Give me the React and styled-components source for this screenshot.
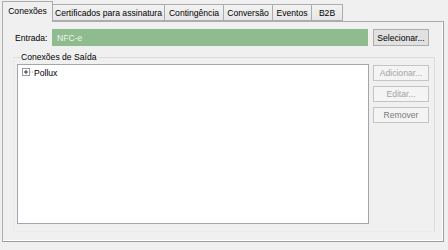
import React from "react";
import styled, { createGlobalStyle } from "styled-components";

const GlobalStyle = createGlobalStyle`
  html, body {
    margin: 0;
    padding: 0;
    background: #f0f0f0;
  }
  body {
    font-family: "Liberation Sans", Arial, sans-serif;
    font-size: 8.6px;
    color: #000;
  }
`;

const Window = styled.div`
  width: 448px;
  height: 250px;
  background: #f0f0f0;
  padding-top: 1px;
  box-sizing: border-box;
`;

const TabStrip = styled.div`
  display: flex;
  align-items: flex-end;
  height: 20px;
  padding-left: 2px;
`;

const Tab = styled.div`
  box-sizing: border-box;
  width: ${(p) => p.$w}px;
  height: ${(p) => (p.$active ? 21 : 17)}px;
  margin-left: ${(p) => (p.$first ? 0 : -1)}px;
  margin-bottom: ${(p) => (p.$active ? -1 : 0)}px;
  border: 1px solid #acacac;
  border-bottom: ${(p) => (p.$active ? "none" : "1px solid #acacac")};
  background: ${(p) => (p.$active ? "#f0f0f0" : "linear-gradient(#f2f2f2, #e6e6e6)")};
  position: relative;
  z-index: ${(p) => (p.$active ? 2 : 1)};
  display: flex;
  align-items: center;
  justify-content: center;
  padding-bottom: ${(p) => (p.$active ? 2 : 0)}px;
  white-space: nowrap;
`;

const Panel = styled.div`
  box-sizing: border-box;
  margin-left: 2px;
  width: 442px;
  height: 221px;
  border: 1px solid #acacac;
  border-right-color: #9d9d9d;
  border-bottom-color: #9d9d9d;
  box-shadow: inset -1px -1px 0 #ffffff;
  display: flex;
  flex-direction: column;
  padding: 7px 0 0 10px;
`;

const EntradaRow = styled.div`
  display: flex;
  align-items: center;
  height: 17px;
`;

const Label = styled.span`
  width: 39px;
  padding-left: 2px;
  box-sizing: border-box;
`;

const GreenField = styled.div`
  box-sizing: border-box;
  width: 316px;
  height: 17px;
  background: #8fbc8f;
  color: #eef5ee;
  display: flex;
  align-items: center;
  padding-left: 5px;
`;

const Button = styled.div`
  box-sizing: border-box;
  width: 56px;
  height: ${(p) => p.$h || 16}px;
  border: 1px solid ${(p) => (p.$disabled ? "#c4c4c4" : "#adadad")};
  background: ${(p) => (p.$disabled ? "#f4f4f4" : "#e1e1e1")};
  color: ${(p) => p.$color || "#000"};
  display: flex;
  align-items: center;
  justify-content: center;
  white-space: nowrap;
`;

const SelectButton = styled(Button)`
  margin-left: 5px;
`;

const Group = styled.fieldset`
  box-sizing: border-box;
  margin: 6px 0 0 0;
  width: 422px;
  height: 180px;
  border: 1px solid #dcdcdc;
  border-left-color: #e9e9e9;
  border-bottom-color: #ececec;
  padding: 2px 0 0 3px;
  min-width: 0;
`;

const Legend = styled.legend`
  padding: 0 1px;
  margin-left: 3px;
  line-height: 10px;
`;

const GroupBody = styled.div`
  display: flex;
  align-items: flex-start;
`;

const TreeBox = styled.div`
  box-sizing: border-box;
  width: 352px;
  height: 160px;
  background: #fff;
  border: 1px solid #a2a6ad;
  padding: 2px 0 0 4px;
`;

const TreeItem = styled.div`
  display: flex;
  align-items: center;
  gap: 1px;
  height: 11px;
`;

const SideButtons = styled.div`
  display: flex;
  flex-direction: column;
  gap: 5px;
  margin-left: 4px;
  margin-top: 1px;
`;

const tabs = [
  { t: "Conexões", w: 51 },
  { t: "Certificados para assinatura", w: 113 },
  { t: "Contingência", w: 60 },
  { t: "Conversão", w: 50 },
  { t: "Eventos", w: 40 },
  { t: "B2B", w: 32 },
];

function Expander() {
  return (
    <svg width="11" height="9" viewBox="0 0 11 9">
      <rect x="0.5" y="0.5" width="7" height="7" fill="#fff" stroke="#9a9a9a" />
      <path d="M2 4h4M4 2v4" stroke="#333" />
      <path d="M8 4h1M10 4h1" stroke="#a0a0a0" />
    </svg>
  );
}

export default function App() {
  return (
    <Window>
      <GlobalStyle />
      <TabStrip>
        {tabs.map((tab, i) => (
          <Tab key={tab.t} $w={tab.w} $first={i === 0} $active={i === 0}>
            {tab.t}
          </Tab>
        ))}
      </TabStrip>
      <Panel>
        <EntradaRow>
          <Label>Entrada:</Label>
          <GreenField>NFC-e</GreenField>
          <SelectButton $h={17}>Selecionar...</SelectButton>
        </EntradaRow>
        <Group>
          <Legend>Conexões de Saída</Legend>
          <GroupBody>
            <TreeBox>
              <TreeItem>
                <Expander />
                <span>Pollux</span>
              </TreeItem>
            </TreeBox>
            <SideButtons>
              <Button $disabled $color="#a3a3a3">Adicionar...</Button>
              <Button $disabled $color="#a3a3a3">Editar...</Button>
              <Button $disabled $color="#7a7a7a">Remover</Button>
            </SideButtons>
          </GroupBody>
        </Group>
      </Panel>
    </Window>
  );
}
